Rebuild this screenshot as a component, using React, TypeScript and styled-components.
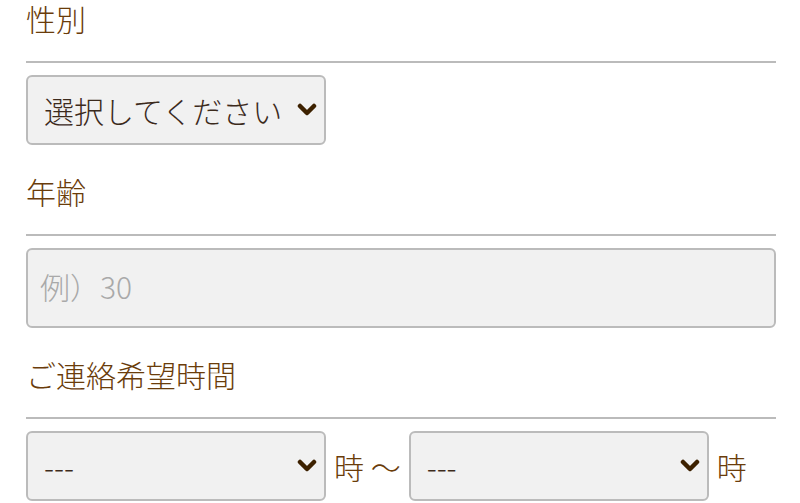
import styled, { createGlobalStyle } from "styled-components";

const GlobalStyle = createGlobalStyle`
  body {
    margin: 0;
    background: #fff;
    font-family: "Noto Sans CJK JP", "Noto Sans", sans-serif;
  }
`;

const Form = styled.form`
  width: 750px;
  padding-left: 26px;
`;

const Section = styled.div`
  margin-bottom: 28px;
`;

const Label = styled.div`
  font-size: 30px;
  font-weight: 300;
  line-height: 37px;
  color: #6a3c0a;
  padding-bottom: 24px;
  border-bottom: 2px solid #bbb;
  margin-bottom: 12px;
`;

const SelectWrap = styled.div`
  position: relative;
  width: 300px;
  flex: none;
`;

const Select = styled.select`
  appearance: none;
  width: 100%;
  height: 70px;
  box-sizing: border-box;
  padding: 0 40px 0 16px;
  border: 2px solid #bbb;
  border-radius: 6px;
  background: #f1f1f1;
  font-family: inherit;
  font-size: 30px;
  font-weight: 300;
  color: #3c2a1c;
  outline: none;
`;

const Chevron = styled.svg`
  position: absolute;
  right: 9px;
  top: 50%;
  margin-top: -7px;
  width: 20px;
  height: 14px;
  pointer-events: none;
`;

const TextInput = styled.input`
  width: 100%;
  height: 80px;
  box-sizing: border-box;
  padding: 0 12px 4px;
  border: 2px solid #bbb;
  border-radius: 6px;
  background: #f1f1f1;
  font-family: inherit;
  font-size: 30px;
  font-weight: 300;
  color: #3c2a1c;
  outline: none;

  &::placeholder {
    color: #a9a9a9;
  }
`;

const TimeRow = styled.div`
  display: flex;
  align-items: center;
  gap: 8px;
`;

const Unit = styled.span`
  font-size: 30px;
  font-weight: 300;
  color: #6a3c0a;
  white-space: nowrap;
`;

const Dropdown = ({ options }: { options: string[] }) => (
  <SelectWrap>
    <Select defaultValue={options[0]}>
      {options.map((o) => (
        <option key={o}>{o}</option>
      ))}
    </Select>
    <Chevron viewBox="0 0 20 14">
      <polyline
        points="3,3 10,10 17,3"
        fill="none"
        stroke="#3d2100"
        strokeWidth="4.5"
        strokeLinecap="round"
        strokeLinejoin="round"
      />
    </Chevron>
  </SelectWrap>
);

const hours = ["---", ...Array.from({ length: 12 }, (_, i) => String(i + 9))];

export default function App() {
  return (
    <>
      <GlobalStyle />
      <Form>
        <Section>
          <Label>性別</Label>
          <Dropdown options={["選択してください", "男性", "女性"]} />
        </Section>
        <Section>
          <Label>年齢</Label>
          <TextInput type="text" placeholder="例）30" />
        </Section>
        <Section>
          <Label>ご連絡希望時間</Label>
          <TimeRow>
            <Dropdown options={hours} />
            <Unit>時 〜</Unit>
            <Dropdown options={hours} />
            <Unit>時</Unit>
          </TimeRow>
        </Section>
      </Form>
    </>
  );
}
